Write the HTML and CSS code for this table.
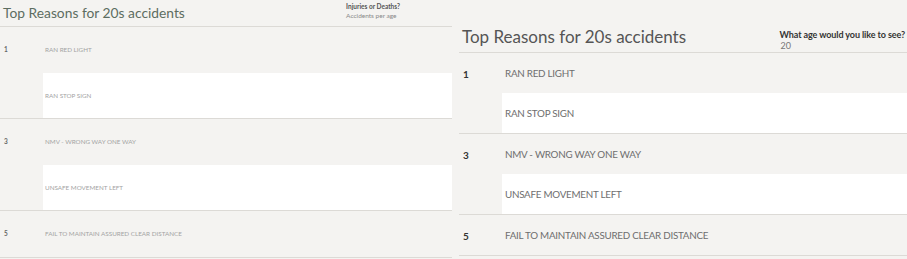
FILE: index.html
```html
<!DOCTYPE html>
<html>
<head>
<meta charset="utf-8">
<link rel="stylesheet" href="styles.css">
</head>
<body>
<div class="page">
  <section class="panel small">
    <header class="head">
      <h1 class="title">Top Reasons for 20s accidents</h1>
      <div class="legend">
        <div class="legend-label">Injuries or Deaths?</div>
        <div class="legend-value">Accidents per age</div>
      </div>
    </header>
    <div class="group">
      <div class="num">1</div>
      <div class="rows">
        <div class="row">RAN RED LIGHT</div>
        <div class="row alt">RAN STOP SIGN</div>
      </div>
    </div>
    <div class="group">
      <div class="num">3</div>
      <div class="rows">
        <div class="row">NMV - WRONG WAY ONE WAY</div>
        <div class="row alt">UNSAFE MOVEMENT LEFT</div>
      </div>
    </div>
    <div class="group">
      <div class="num">5</div>
      <div class="rows">
        <div class="row">FAIL TO MAINTAIN ASSURED CLEAR DISTANCE</div>
      </div>
    </div>
  </section>
  <section class="panel large">
    <header class="head">
      <h1 class="title">Top Reasons for 20s accidents</h1>
      <div class="legend">
        <div class="legend-label">What age would you like to see?</div>
        <div class="legend-value">20</div>
      </div>
    </header>
    <div class="group">
      <div class="num">1</div>
      <div class="rows">
        <div class="row">RAN RED LIGHT</div>
        <div class="row alt">RAN STOP SIGN</div>
      </div>
    </div>
    <div class="group">
      <div class="num">3</div>
      <div class="rows">
        <div class="row">NMV - WRONG WAY ONE WAY</div>
        <div class="row alt">UNSAFE MOVEMENT LEFT</div>
      </div>
    </div>
    <div class="group">
      <div class="num">5</div>
      <div class="rows">
        <div class="row">FAIL TO MAINTAIN ASSURED CLEAR DISTANCE</div>
      </div>
    </div>
  </section>
</div>
</body>
</html>
```
FILE: styles.css
```css
* { box-sizing: border-box; }
html, body {
  margin: 0;
  padding: 0;
  background: #f4f3f1;
  font-family: Lato, "Open Sans", sans-serif;
}
.page {
  display: flex;
  width: 907px;
  height: 259px;
  overflow: hidden;
  gap: 4px;
}
.panel {
  display: flex;
  flex-direction: column;
}
.panel.small { width: 452px; }
.panel.large { flex: 1; padding-left: 3px; }

.head {
  display: flex;
  align-items: flex-start;
  border-bottom: 1px solid #dcdad6;
}
.title {
  margin: 0;
  font-weight: 400;
}
.legend { margin-left: auto; }
.legend-label { font-weight: 700; }

.group {
  display: flex;
  border-bottom: 1px solid #dcdad6;
}
.num { width: 43px; flex: none; }
.rows { flex: 1; display: flex; flex-direction: column; }
.row { display: flex; align-items: center; }
.row.alt { background: #ffffff; }

/* small (left) view */
.small .head { height: 27px; }
.small .title {
  font-size: 13.8px;
  color: #5d6d61;
  padding: 5px 0 0 3px;
  line-height: 16px;
}
.small .legend {
  margin-right: 52px;
  font-size: 6.5px;
  line-height: 9px;
  padding-top: 2px;
}
.small .legend-label { color: #555; }
.small .legend-value { color: #888; }
.small .num {
  font-size: 6.5px;
  color: #666;
  font-weight: 700;
  padding: 19px 0 0 4px;
}
.small .row {
  height: 45.5px;
  font-size: 6.3px;
  color: #a3a3a3;
  padding-left: 2px;
}

/* large (right) view */
.large .head { height: 53px; padding-top: 27px; }
.large .title {
  font-size: 17px;
  color: #555;
  padding-left: 3px;
  line-height: 20px;
}
.large .legend {
  margin-right: 2px;
  margin-top: 2px;
  font-size: 9px;
  line-height: 11px;
  letter-spacing: -0.1px;
}
.large .legend-label { color: #333; }
.large .legend-value { color: #777; padding-left: 1px; }
.large .num {
  font-size: 10px;
  color: #333;
  font-weight: 700;
  padding: 15px 0 0 4px;
}
.large .row {
  height: 40px;
  font-size: 9.8px;
  letter-spacing: -0.25px;
  color: #6e6e6e;
  padding-left: 3px;
}
```
